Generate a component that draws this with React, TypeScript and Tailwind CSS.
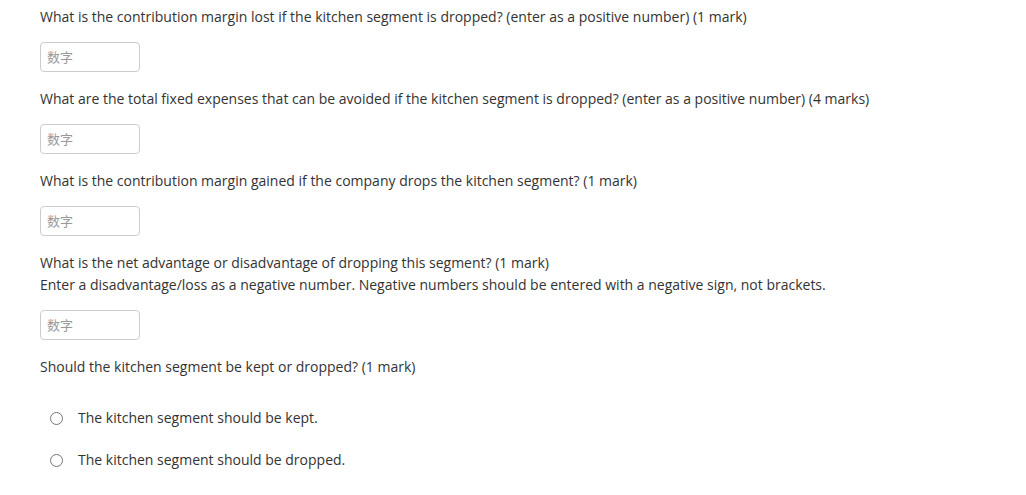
const font = { fontFamily: '"Open Sans", "Noto Sans CJK SC", sans-serif' };

const questions: { lines: string[] }[] = [
  {
    lines: [
      "What is the contribution margin lost if the kitchen segment is dropped? (enter as a positive number) (1 mark)",
    ],
  },
  {
    lines: [
      "What are the total fixed expenses that can be avoided if the kitchen segment is dropped? (enter as a positive number) (4 marks)",
    ],
  },
  {
    lines: [
      "What is the contribution margin gained if the company drops the kitchen segment? (1 mark)",
    ],
  },
  {
    lines: [
      "What is the net advantage or disadvantage of dropping this segment? (1 mark)",
      "Enter a disadvantage/loss as a negative number. Negative numbers should be entered with a negative sign, not brackets.",
    ],
  },
];

const options = [
  "The kitchen segment should be kept.",
  "The kitchen segment should be dropped.",
];

function NumberBox() {
  return (
    <input
      type="text"
      placeholder="数字"
      className="block w-[100px] h-[30px] mt-[14px] mb-[16px] px-[6px] rounded-[4px] border border-[#cccccc] bg-white text-[13px] text-[#333] placeholder:text-[#999] outline-none"
      style={font}
    />
  );
}

export default function App() {
  return (
    <main className="min-h-screen bg-white pl-[40px] pt-[6px] text-[#333] text-[14px] leading-[22px]" style={font}>
      {questions.map((q, i) => (
        <div key={i}>
          {q.lines.map((line, j) => (
            <p key={j}>{line}</p>
          ))}
          <NumberBox />
        </div>
      ))}
      <p>Should the kitchen segment be kept or dropped? (1 mark)</p>
      <div className="mt-[19px] pl-[10px]">
        {options.map((opt) => (
          <label key={opt} className="flex items-center h-[42px] cursor-pointer">
            <span className="w-[13px] h-[13px] rounded-full border-[1.5px] border-[#767676] bg-white shrink-0" />
            <span className="ml-[15px]">{opt}</span>
          </label>
        ))}
      </div>
    </main>
  );
}
